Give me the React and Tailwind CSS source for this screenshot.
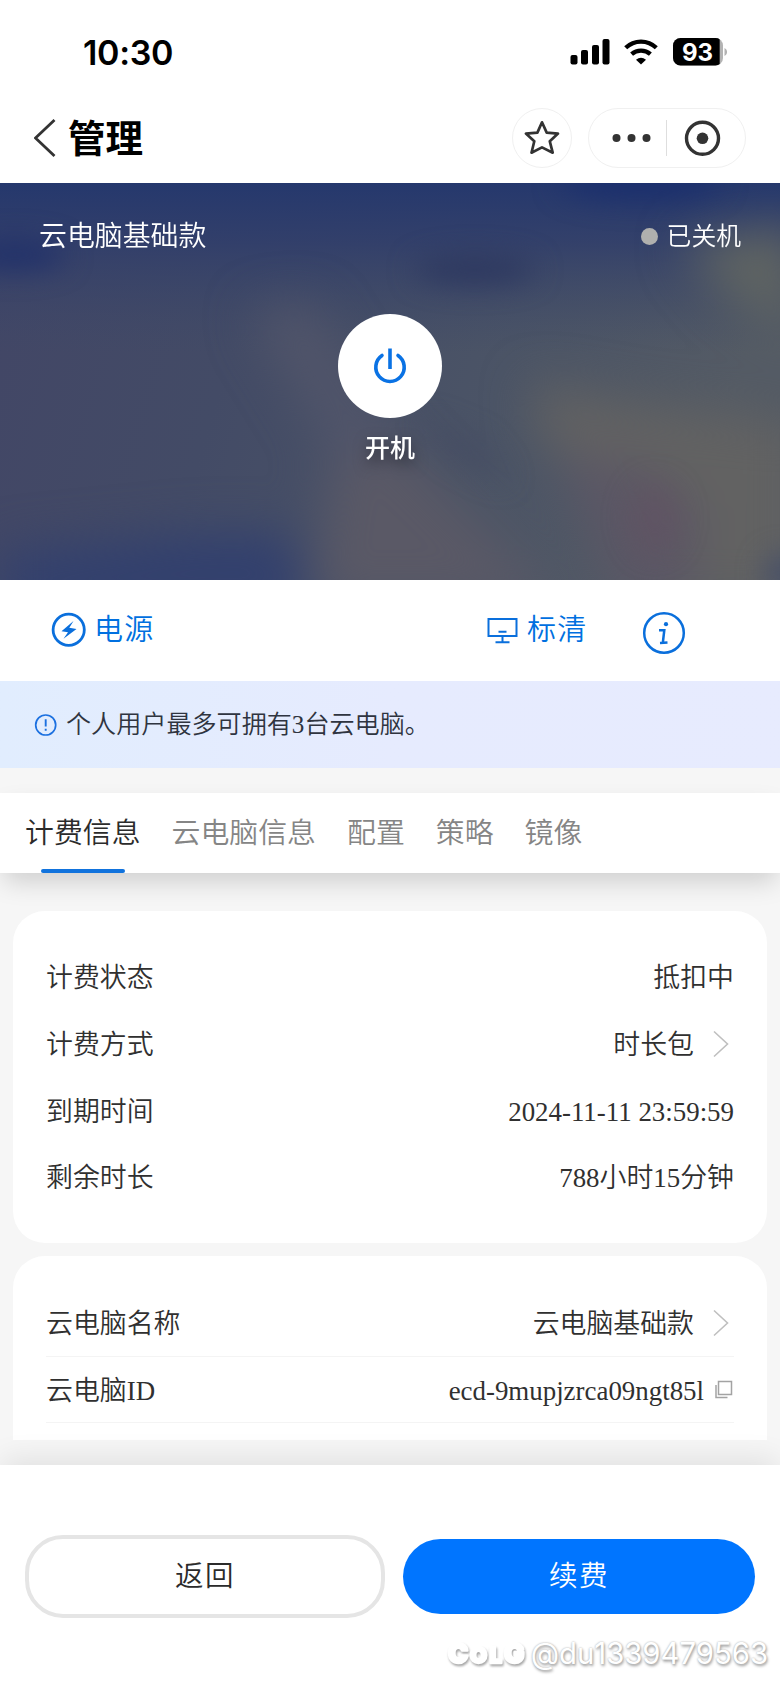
const SANS = "font-['Liberation_Sans','Noto_Sans_CJK_SC',sans-serif]";
const SERIF = "font-['Liberation_Serif','Noto_Sans_CJK_SC',serif]";

function StatusBar() {
  return (
    <div className="flex h-[98px] items-start justify-between pt-[32px] pr-[53px] pl-[83px]">
      <span className="font-['Inter',sans-serif] text-[34px] leading-[41px] font-semibold tracking-[-0.3px] text-black">10:30</span>
      <svg width="157" height="28" viewBox="0 0 157 28" className="mt-[6px]">
        <g fill="#000">
          <rect x="0.5" y="17" width="7" height="9.5" rx="2" />
          <rect x="11" y="12" width="7" height="14.5" rx="2" />
          <rect x="22" y="7" width="7" height="19.500" rx="2" />
          <rect x="32.500" y="1" width="7" height="25.500" rx="2" />
        </g>
        <g fill="none" stroke="#000" strokeWidth="4.300">
          <path d="M55.700 9.800A22 22 0 0 1 86.300 9.800" />
          <path d="M61.600 16.200A14 14 0 0 1 80.400 16.200" />
        </g>
        <path d="M66 21.700A8 8 0 0 1 76 21.700L71 26.600Z" fill="#000" />
        <clipPath id="charge"><rect x="0" y="0" width="149.700" height="28" /></clipPath>
        <rect x="103" y="0" width="50" height="27.500" rx="7.500" fill="#b3b3b3" />
        <rect x="103" y="0" width="50" height="27.500" rx="7.500" fill="#000" clipPath="url(#charge)" />
        <path d="M154.500 10q2.600 1 2.600 4t-2.600 4z" fill="#b3b3b3" />
        <text x="127.500" y="22.600" textAnchor="middle" fill="#fff" fontFamily="Inter" fontWeight="700" fontSize="24">93</text>
      </svg>
    </div>
  );
}

function NavBar() {
  return (
    <div className="flex h-[85px] items-start pt-[10px] pr-[34px] pl-[34px]">
      <svg width="24" height="40" viewBox="0 0 24 40" className="mt-[10px]">
        <path d="M20.500 2L1.500 20L20.500 38" fill="none" stroke="#333" strokeWidth="2.800" />
      </svg>
      <h1 className={`mt-[2px] ml-[10px] flex-1 text-[37.500px] leading-[58px] font-bold text-black ${SANS}`}>管理</h1>
      <div className="flex size-[60px] items-center justify-center rounded-full border border-[#f0f0f0]">
        <svg width="38" height="38" viewBox="0 0 38 38">
          <path d="M19 3.300L23.700 13.600L35 14.600L26.800 22.300L29.700 33.700L19 28.400L8.500 33.700L11.300 22.300L2.900 14.600L14.400 13.600Z" fill="none" stroke="#333" strokeWidth="2.700" strokeLinejoin="round" />
        </svg>
      </div>
      <div className="ml-[16px] flex h-[60px] w-[158px] items-center rounded-full border border-[#f0f0f0]">
        <svg width="156" height="58" viewBox="0 0 156 58">
          <g fill="#333">
            <circle cx="27.500" cy="29" r="4" />
            <circle cx="42.500" cy="29" r="4" />
            <circle cx="57.500" cy="29" r="4" />
            <circle cx="113.500" cy="29.300" r="5.800" />
          </g>
          <path d="M77.500 11V47" stroke="#dedede" strokeWidth="1" />
          <circle cx="113.500" cy="29.300" r="16" fill="none" stroke="#333" strokeWidth="3.400" />
        </svg>
      </div>
    </div>
  );
}

function Backdrop() {
  return (
    <svg className="absolute inset-0" width="780" height="397" viewBox="0 0 780 397" preserveAspectRatio="none">
      <defs>
        <linearGradient id="base" x1="0" y1="0" x2="1" y2="0.150">
          <stop offset="0" stopColor="#424666" />
          <stop offset="0.350" stopColor="#434b66" />
          <stop offset="0.700" stopColor="#4b5466" />
          <stop offset="1" stopColor="#545b65" />
        </linearGradient>
        <linearGradient id="top" x1="0" y1="0" x2="0" y2="1">
          <stop offset="0" stopColor="#25386d" />
          <stop offset="0.350" stopColor="#2f3d6b" stopOpacity="0.850" />
          <stop offset="1" stopColor="#3c4867" stopOpacity="0" />
        </linearGradient>
        <filter id="soft" x="-60%" y="-60%" width="220%" height="220%" colorInterpolationFilters="sRGB"><feGaussianBlur stdDeviation="24" /></filter>
        <filter id="mid" x="-60%" y="-100%" width="220%" height="300%" colorInterpolationFilters="sRGB"><feGaussianBlur stdDeviation="14" /></filter>
      </defs>
      <rect width="780" height="397" fill="url(#base)" />
      <rect width="780" height="170" fill="url(#top)" />
      <g filter="url(#soft)">
        <path d="M250 130L310 120L390 250L540 420H310L330 260Z" fill="#51556a" />
        <path d="M340 280L400 260L560 420H320Z" fill="#5a5966" />
        <path d="M530 200L640 220L800 240V420H700L540 250Z" fill="#626262" />
        <path d="M560 270L640 280L700 330L690 420H620Z" fill="#5c5765" />
        <path d="M0 370L200 350L290 350L310 430H0Z" fill="#32406e" />
        <path d="M680 60L800 40V160L730 120Z" fill="#5f6462" />
      </g>
      <g filter="url(#mid)">
        <ellipse cx="15" cy="72" rx="50" ry="14" fill="#20306a" />
        <ellipse cx="640" cy="-2" rx="80" ry="18" fill="#1b2f6d" />
        <ellipse cx="475" cy="87" rx="60" ry="13" fill="#2c375f" />
        <path d="M420 235L480 260L510 300L450 270Z" fill="#454c63" />
        <ellipse cx="655" cy="335" rx="24" ry="35" fill="#625263" opacity="0.550" />
        <ellipse cx="785" cy="390" rx="20" ry="18" fill="#454e68" />
      </g>
    </svg>
  );
}

function Hero() {
  return (
    <section className={`relative flex h-[397px] flex-col overflow-hidden text-white ${SANS}`}>
      <Backdrop />
      <div className="relative flex h-[106px] items-center justify-between pr-[39px] pl-[39px]">
        <span className="mt-[2px] text-[27.900px] leading-[40px] font-[350]">云电脑基础款</span>
        <span className="flex items-center gap-[9px] text-[24.800px] leading-[40px] font-[350]">
          <i className="size-[17px] rounded-full bg-[#b0b0ae]" />
          <span className="pt-[1px]">已关机</span>
        </span>
      </div>
      <div className="relative mt-[25px] flex flex-col items-center">
        <div className="flex size-[104px] items-center justify-center rounded-full bg-white">
          <svg width="40" height="40" viewBox="0 0 40 40">
            <g fill="none" stroke="#0a72e4" strokeWidth="3.600" strokeLinecap="round">
              <path d="M12 9.500A14.200 14.200 0 1 0 28 9.500" />
              <path d="M20 2.500V23" strokeLinecap="butt" />
            </g>
          </svg>
        </div>
        <span className="mt-[12px] text-[25px] leading-[36px] font-medium [text-shadow:0_6px_14px_rgba(0,0,0,0.5)]">开机</span>
      </div>
    </section>
  );
}

function Toolbar() {
  return (
    <div className={`flex h-[101px] items-start bg-white pt-[30px] pl-[51px] text-[29px] leading-[40px] font-[350] tracking-[1.300px] text-[#0070e0] ${SANS}`}>
      <svg width="36" height="36" viewBox="0 0 36 36" className="mt-[2px]">
        <circle cx="17.700" cy="17.700" r="15.600" fill="none" stroke="#0a6fdc" strokeWidth="2.800" />
        <path d="M22.500 9L10.500 19.300L17 20.300L12.500 26.800L25.500 17L18.300 15.700Z" fill="#0a6fdc" />
      </svg>
      <span className="ml-[7px] w-[393px]">电源</span>
      <svg width="32" height="28" viewBox="0 0 32 28" className="mt-[7px]">
        <path d="M1.500 2H29.500V19H1.500ZM15.500 19V24.500M11.500 14.700H19.500M8.500 25.200H22.500" fill="none" stroke="#0a6fdc" strokeWidth="2" />
      </svg>
      <span className="ml-[8px] w-[115px]">标清</span>
      <svg width="44" height="44" viewBox="0 0 44 44" className="mt-[1px]">
        <circle cx="22" cy="22" r="19.800" fill="none" stroke="#0a6fdc" strokeWidth="2.500" />
        <circle cx="24" cy="13.200" r="2.100" fill="#0a6fdc" />
        <path d="M17 19.200H22.300L20.800 32M18 32L25.500 31.500" fill="none" stroke="#0a6fdc" strokeWidth="2.500" />
      </svg>
    </div>
  );
}

function Notice() {
  return (
    <div className={`flex h-[87px] items-center bg-linear-to-r from-[#e1edfe] via-[#e6ebfe] to-[#e7ebfe] pl-[34px] text-[25.100px] text-[#2f3440] ${SERIF}`}>
      <svg width="24" height="24" viewBox="0 0 24 24">
        <circle cx="11.700" cy="12" r="10" fill="none" stroke="#1b70e0" strokeWidth="1.700" />
        <path d="M11.700 6.200V13.500M11.700 15.800V17.800" stroke="#1b70e0" strokeWidth="1.900" />
      </svg>
      <span className="ml-[8px] leading-[36px] font-[350]">个人用户最多可拥有3台云电脑。</span>
    </div>
  );
}

function Tabs() {
  const others = ["云电脑信息", "配置", "策略", "镜像"];
  return (
    <nav className={`relative mt-[25px] flex h-[80px] gap-[31px] bg-white pl-[25px] text-[28.900px] leading-[81px] font-[350] text-[#858585] shadow-[0_12px_26px_-4px_rgba(0,0,0,0.17)] ${SANS}`}>
      <div className="flex flex-col items-center text-[#2b2b2b]">
        <span className="h-[76px]">计费信息</span>
        <i className="h-[4px] w-[84px] rounded-full bg-[#1173dd]" />
      </div>
      {others.map((t) => (
        <span key={t}>{t}</span>
      ))}
    </nav>
  );
}

function Chevron() {
  return (
    <svg width="18" height="28" viewBox="0 0 18 28" className="mr-[4px] ml-[18px]">
      <path d="M2 1.500L15.500 14L2 26.500" fill="none" stroke="#bfbfbf" strokeWidth="1.600" />
    </svg>
  );
}

function CopyIcon() {
  return (
    <svg width="18" height="20" viewBox="0 0 18 20" className="mr-[1px] ml-[11px]">
      <path d="M3.500 1.500H16.500V14.500H3.500ZM1 5V17.500H12.500" fill="none" stroke="#a3a3a3" strokeWidth="1.500" />
    </svg>
  );
}

function Row({ label, value, icon, line }) {
  return (
    <div className={line ? "flex h-[66.700px] items-center border-b border-[#f4f4f4]" : "flex h-[66.700px] items-center"}>
      <span className="flex-1 pt-[2px]">{label}</span>
      <span className="pt-[2px]">{value}</span>
      {icon}
    </div>
  );
}

function Watermark() {
  return (
    <div className="absolute right-[12px] bottom-[14px] flex items-center tracking-normal">
      <svg width="84" height="36" viewBox="0 0 84 36" className="mr-[1px] drop-shadow-[1px_2px_1px_rgba(0,0,0,0.35)]">
        <text y="27" fill="#fff" stroke="#fff" strokeWidth="2.500" strokeLinejoin="round" fontFamily="Inter" fontWeight="900">
          <tspan x="2" fontSize="27">C</tspan>
          <tspan x="24" fontSize="22">O</tspan>
          <tspan x="43.500" fontSize="22">L</tspan>
          <tspan x="58" fontSize="27">G</tspan>
        </text>
      </svg>
      <span className="font-['Inter',sans-serif] text-[29.300px] leading-[40px] font-normal text-white [text-shadow:0_0_2px_#aaa,1px_2px_3px_#999]">@du1339479563</span>
    </div>
  );
}

export default function App() {
  return (
    <div className="flex h-[1688px] w-[780px] flex-col overflow-hidden bg-[#f6f6f6]">
      <header className="bg-white">
        <StatusBar />
        <NavBar />
      </header>
      <Hero />
      <Toolbar />
      <Notice />
      <Tabs />
      <main className={`mt-[38px] flex h-[529px] flex-col gap-[13px] overflow-hidden px-[13px] text-[26.900px] leading-[40px] font-[350] text-[#303030] ${SERIF}`}>
        <section className="h-[332px] shrink-0 rounded-[32px] bg-white px-[33px] pt-[33px]">
          <Row label="计费状态" value="抵扣中" />
          <Row label="计费方式" value="时长包" icon={<Chevron />} />
          <Row label="到期时间" value="2024-11-11 23:59:59" />
          <Row label="剩余时长" value="788小时15分钟" />
        </section>
        <section className="h-[220px] shrink-0 rounded-[32px] bg-white px-[33px] pt-[34px]">
          <Row label="云电脑名称" value="云电脑基础款" icon={<Chevron />} line />
          <Row label="云电脑ID" value="ecd-9mupjzrca09ngt85l" icon={<CopyIcon />} line />
        </section>
      </main>
      <footer className={`relative mt-[25px] flex h-[223px] items-start bg-white pt-[70px] pl-[25px] text-[28.500px] font-[350] tracking-[1.500px] shadow-[0_-8px_28px_-2px_rgba(0,0,0,0.09)] ${SANS}`}>
        <button className="h-[83px] w-[360px] rounded-[38px] border-4 border-[#e5e5e5] text-[#2b2b2b]">返回</button>
        <button className="mt-[4px] ml-[18px] h-[75px] w-[352px] rounded-full bg-[#0075ff] text-white">续费</button>
        <Watermark />
      </footer>
    </div>
  );
}
